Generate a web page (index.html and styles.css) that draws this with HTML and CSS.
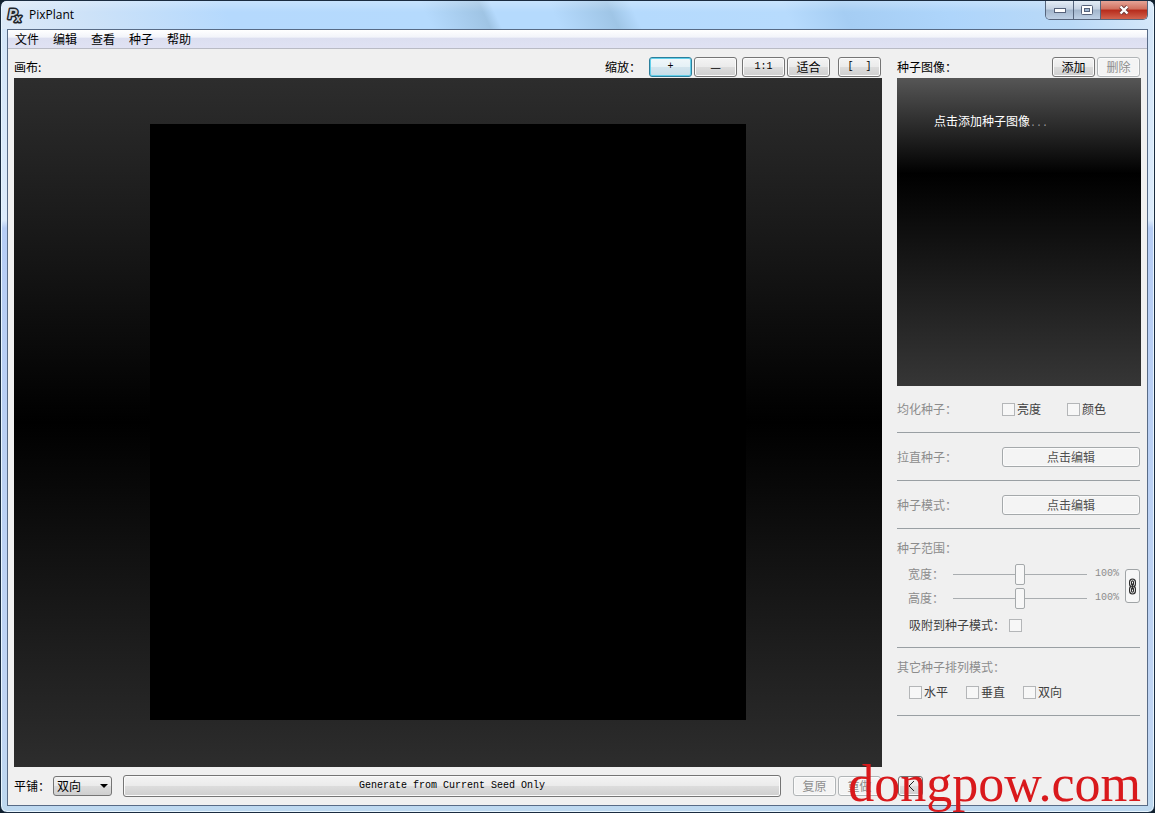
FILE: index.html
```html
<!DOCTYPE html>
<html lang="zh-CN">
<head>
<meta charset="utf-8">
<title>PixPlant</title>
<link rel="stylesheet" href="styles.css">
</head>
<body>
<div class="window">
  <header class="titlebar">
    <svg class="app-icon" viewBox="0 0 17 17" aria-hidden="true">
      <g class="app-letters">
        <text x="1" y="12" font-size="14">P</text>
        <text x="8" y="15" font-size="11">x</text>
      </g>
    </svg>
    <span class="title">PixPlant</span>
    <div class="window-buttons">
      <button class="win-btn win-min" aria-label="最小化"><svg width="14" height="8" viewBox="0 0 14 8"><rect x="1.5" y="2.5" width="11" height="4" fill="#fff" stroke="#56627a"/></svg></button>
      <button class="win-btn win-max" aria-label="最大化"><svg width="12" height="10" viewBox="0 0 12 10"><rect x=".5" y=".5" width="11" height="9" rx="1" fill="#fff" stroke="#56627a"/><rect x="3.5" y="3.5" width="5" height="3" fill="#9fb6d0" stroke="#56627a"/></svg></button>
      <button class="win-btn win-close" aria-label="关闭"><svg width="12" height="10" viewBox="0 0 12 10"><path d="M2.500 1.500l7 7M9.500 1.500l-7 7" stroke="#6b3a3a" stroke-width="4"/><path d="M2.500 1.500l7 7M9.500 1.500l-7 7" stroke="#fff" stroke-width="2.400"/></svg></button>
    </div>
  </header>

  <div class="client">
    <nav class="menubar">
      <button class="menu">文件</button>
      <button class="menu">编辑</button>
      <button class="menu">查看</button>
      <button class="menu">种子</button>
      <button class="menu">帮助</button>
    </nav>

    <div class="workspace">
      <main class="canvas-column">
        <div class="toolbar">
          <span class="toolbar-label">画布:</span>
          <span class="zoom-label">缩放：</span>
          <div class="pair">
            <button class="btn focused">+</button>
            <button class="btn cjk">—</button>
          </div>
          <div class="pair">
            <button class="btn">1:1</button>
            <button class="btn cjk">适合</button>
          </div>
          <button class="btn brackets">[&nbsp; ]</button>
        </div>
        <div class="canvas-view"><div class="canvas-image"></div></div>
      </main>

      <aside class="seed-column">
        <div class="toolbar">
          <span class="toolbar-label">种子图像：</span>
          <div class="pair">
            <button class="btn cjk">添加</button>
            <button class="btn cjk" disabled>删除</button>
          </div>
        </div>
        <div class="seed-view">点击添加种子图像<span class="dots">...</span></div>

        <section class="section row">
          <span class="name muted">均化种子：</span>
          <div class="equalize">
            <label class="check"><input type="checkbox" disabled>亮度</label>
            <label class="check"><input type="checkbox" disabled>颜色</label>
          </div>
        </section>
        <section class="section row">
          <span class="name muted">拉直种子：</span>
          <button class="btn wide" disabled>点击编辑</button>
        </section>
        <section class="section row">
          <span class="name muted">种子模式：</span>
          <button class="btn wide" disabled>点击编辑</button>
        </section>
        <section class="section range">
          <span class="muted">种子范围：</span>
          <div class="range-body">
            <div class="sliders">
              <div class="slider-row muted"><label for="w">宽度：</label><input id="w" type="range" disabled><output class="percent">100%</output></div>
              <div class="slider-row muted"><label for="h">高度：</label><input id="h" type="range" disabled><output class="percent">100%</output></div>
            </div>
            <button class="link-btn" aria-label="锁定比例"><svg width="9" height="17" viewBox="0 0 9 17" fill="none"><g stroke="#2a2a2a" stroke-width="3"><rect x="2.500" y="2" width="4" height="6" rx="2"/><rect x="2.500" y="9" width="4" height="6" rx="2"/></g><g stroke="#d8d8d8"><rect x="2.500" y="2" width="4" height="6" rx="2"/><rect x="2.500" y="9" width="4" height="6" rx="2"/></g><path d="M4.500 5.500v6" stroke="#2a2a2a" stroke-width="1.500"/></svg></button>
          </div>
          <label class="check snap">吸附到种子模式：<input type="checkbox" disabled></label>
        </section>
        <section class="section mirror">
          <span class="muted">其它种子排列模式：</span>
          <div class="mirror-options">
            <label class="check"><input type="checkbox" disabled>水平</label>
            <label class="check"><input type="checkbox" disabled>垂直</label>
            <label class="check"><input type="checkbox" disabled>双向</label>
          </div>
        </section>
      </aside>
    </div>

    <footer class="bottombar">
      <label class="tile-label" for="tile">平铺：</label>
      <div class="select-wrap">
        <select id="tile" class="select"><option>双向</option></select>
        <svg class="arrow" width="8" height="4" viewBox="0 0 8 4"><path d="M0 0h8L4 4z" fill="#000"/></svg>
      </div>
      <button class="btn generate">Generate from Current Seed Only</button>
      <div class="pair">
        <button class="btn cjk" disabled>复原</button>
        <button class="btn cjk" disabled>重做</button>
      </div>
      <button class="btn collapse" aria-label="收起"><svg width="8" height="12" viewBox="0 0 8 12"><path d="M7 1L2 6l5 5" fill="none" stroke="#222"/></svg></button>
    </footer>
  </div>
  <div class="watermark">dongpow.com</div>
</div>
</body>
</html>
```
FILE: styles.css
```css
* { box-sizing: border-box; }

body {
  margin: 0;
  background: #10202e;
  color: #000;
  font: 12px/16px "Noto Sans CJK SC", sans-serif;
}

button, select, input { font: inherit; color: inherit; margin: 0; padding: 0; }

.window {
  position: relative;
  display: flex;
  flex-direction: column;
  height: 100vh;
  padding: 0 6px 6px;
  border: 1px solid #1b2c40;
  border-radius: 7px;
  background: linear-gradient(#d3e5f8 0, #dcebfb 27%, #b6cdf5 28%, #c0d5f3 90%, #bdd8ef 100%);
  box-shadow: inset 0 0 0 1px #e8f6ff;
  overflow: hidden;
}

.titlebar {
  display: flex;
  align-items: center;
  flex: none;
  height: 28px;
  margin: 0 -5px;
  padding-left: 5px;
  background:
    linear-gradient(#ffffff40, #ffffff00 40%),
    linear-gradient(65deg, #dce9f7 0, #cde2f8 8%, #b5d9fd 20%, #b5dafd 37%, #9fc4e4 42%, #b5dafd 43%, #b5dafd 48%, #9fc5e6 53%, #b5dafd 55%, #b7dbfd 68%, #a5cdf3 73%, #aed5fb 82%, #b9d9f7 92%, #d8e9fa 100%);
}

.app-icon { width: 17px; height: 17px; overflow: visible; }
.app-letters {
  font-family: "Liberation Sans", sans-serif;
  font-weight: bold;
  font-style: italic;
  fill: #c9d2dc;
  stroke: #20252b;
  stroke-width: 3px;
  stroke-linejoin: round;
  paint-order: stroke;
}

.title { margin-left: 5px; font-family: "Open Sans", sans-serif; }

.window-buttons {
  display: flex;
  align-self: flex-start;
  height: 19px;
  margin-left: auto;
  margin-right: 5px;
  border: 1px solid #56657c;
  border-top: 0;
  border-radius: 0 0 5px 5px;
  overflow: hidden;
}
.win-btn {
  display: grid;
  place-items: center;
  width: 27px;
  border: 0;
  border-right: 1px solid #56657c;
  background: linear-gradient(#e4edf6, #c5d2e2 45%, #a2b5cb 50%, #bed0e5);
}
.win-min { width: 28px; }
.win-close {
  width: 46px;
  border-right: 0;
  background: linear-gradient(#e6a497, #d1705e 45%, #b62a1b 50%, #d2644f);
}

.client {
  display: flex;
  flex-direction: column;
  flex: 1;
  min-height: 0;
  border: 1px solid #586b86;
  background: #f0f0f0;
}

.menubar {
  display: flex;
  gap: 14px;
  flex: none;
  height: 19px;
  padding-left: 7px;
  border-bottom: 1px solid #b9bbc4;
  background: linear-gradient(#fff, #f2f4fa 40%, #dcdff0 45%, #e0e2f3);
}
.menu { border: 0; background: none; }

.workspace {
  display: grid;
  grid-template-columns: minmax(0, 1fr) 244px;
  gap: 15px;
  flex: 1;
  min-height: 0;
  padding: 0 6px;
}

.canvas-column, .seed-column { display: flex; flex-direction: column; min-height: 0; }

.toolbar {
  display: flex;
  align-items: center;
  flex: none;
  height: 29px;
  padding: 7px 1px 0 0;
}
.toolbar-label { margin-right: auto; }
.zoom-label { margin-right: 8px; }
.pair { display: flex; gap: 2px; }
.toolbar .pair + .pair { margin-left: 5px; }
.brackets { margin-left: 8px; }

.btn {
  width: 43px;
  height: 20px;
  border: 1px solid #757575;
  border-radius: 3px;
  background: linear-gradient(#f4f4f4, #ebebeb 48%, #dcdcdc 52%, #cfcfcf);
  box-shadow: inset 0 0 0 1px #fbfbfb;
  font: 10px/18px "Liberation Mono", monospace;
}
.btn.cjk, .btn.wide { font: 12px/16px "Noto Sans CJK SC", sans-serif; }
.btn.focused {
  border-color: #2c7f9c;
  background: linear-gradient(#f1f7fa, #e5f1f6 48%, #d2e4ed 52%, #c6dde8);
  box-shadow: inset 0 0 0 1px #62cfea;
}
.btn:disabled {
  border-color: #b0b4b6;
  background: #f4f4f4;
  color: #8d8d8d;
}
.btn.wide:disabled { width: 138px; border-color: #a5a9ab; color: #505050; }

.canvas-view {
  display: flex;
  justify-content: center;
  flex: 1;
  min-height: 0;
  padding: 46px 0 47px;
  background: linear-gradient(#2d2d2d, #000 50%, #2d2d2d);
}
.canvas-image { height: 100%; aspect-ratio: 1; background: #000; }

.seed-view {
  flex: none;
  height: 308px;
  padding: 35px 37px;
  background: linear-gradient(#565656, #000 31%, #363636);
  color: #fff;
}
.dots { color: #999; font: 10px/16px "Liberation Mono", monospace; }

.muted { color: #8c8c8c; }

.section {
  flex: none;
  margin-right: 1px;
  border-bottom: 1px solid #999fa3;
}
.row { display: flex; align-items: center; height: 48px; }
.seed-view + .row { height: 47px; }
.name { width: 105px; }
.equalize { display: flex; gap: 26px; }

.check { display: flex; align-items: center; gap: 2px; color: #404040; }
input[type="checkbox"] {
  appearance: none;
  width: 13px;
  height: 13px;
  border: 1px solid #b4b6b8;
  background: #f7f7f7;
}

.range { height: 119px; padding-top: 11px; }
.range-body { display: flex; align-items: center; justify-content: space-between; height: 48px; margin-top: 6px; }
.sliders { padding-left: 11px; }
.slider-row { display: flex; align-items: center; height: 24px; }
.slider-row label { width: 45px; }
.percent { margin-left: 8px; font: 10px/16px "Liberation Mono", monospace; }
input[type="range"] {
  appearance: none;
  width: 134px;
  height: 22px;
  background: linear-gradient(#a9adb0, #a9adb0) center / 100% 1px no-repeat;
}
input[type="range"]::-webkit-slider-thumb {
  appearance: none;
  width: 10px;
  height: 21px;
  border: 1px solid #a5a9ab;
  border-radius: 2px;
  background: #f7f7f7;
}
.link-btn {
  display: grid;
  place-items: center;
  width: 15px;
  height: 34px;
  border: 1px solid #a0a4a6;
  border-radius: 3px;
  background: #f7f7f7;
}
.snap { gap: 4px; margin-top: 7px; padding-left: 12px; }

.mirror { height: 68px; padding-top: 11px; }
.mirror-options { display: flex; gap: 18px; margin-top: 9px; padding-left: 12px; }

.bottombar {
  display: flex;
  align-items: center;
  flex: none;
  height: 38px;
  padding: 0 224px 0 6px;
}
.tile-label { width: 39px; }
.select-wrap { display: grid; align-items: center; width: 59px; margin-right: 11px; }
.select {
  grid-area: 1 / 1;
  appearance: none;
  height: 20px;
  padding-left: 3px;
  border: 1px solid #757575;
  border-radius: 3px;
  background: linear-gradient(#f4f4f4, #ebebeb 48%, #dcdcdc 52%, #cfcfcf);
}
.arrow { grid-area: 1 / 1; justify-self: end; margin-right: 4px; pointer-events: none; }
.generate { flex: 1; height: 22px; margin-right: 12px; }
.collapse { display: grid; place-items: center; width: 25px; margin-left: 17px; }

.watermark {
  position: absolute;
  right: 13px;
  bottom: 0;
  color: #d9191c;
  font: 52px/56px "Liberation Serif", serif;
  pointer-events: none;
}
```
